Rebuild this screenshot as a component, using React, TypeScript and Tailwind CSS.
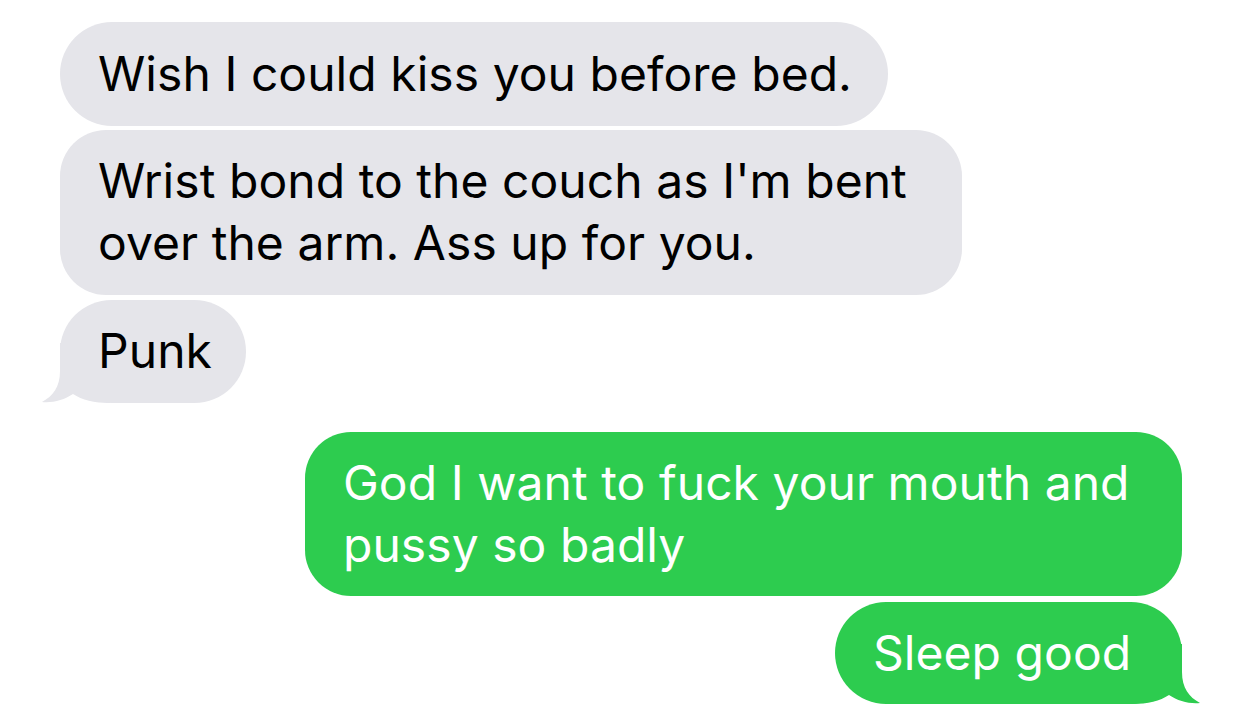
const gray = "#e5e5ea";
const green = "#2dcc4f";

const TailLeft = () => (
  <svg
    className="absolute left-[-20px] bottom-0"
    width="70"
    height="60"
    viewBox="0 0 70 60"
  >
    <path
      d="M20 0 L20 28 C20 44 13 53 2 59 C13 60 24 57 33 51 C42 57 54 60 70 60 L70 0 Z"
      fill={gray}
    />
  </svg>
);

const TailRight = () => (
  <svg
    className="absolute right-[-20px] bottom-0"
    width="70"
    height="60"
    viewBox="0 0 70 60"
  >
    <path
      d="M50 0 L50 28 C50 44 57 53 68 59 C57 60 46 57 37 51 C28 57 16 60 0 60 L0 0 Z"
      fill={green}
    />
  </svg>
);

const App = () => {
  return (
    <div
      className="w-[1242px] h-[723px] bg-white overflow-hidden px-[60px] pt-[22px] flex flex-col text-[48px] leading-[62px] tracking-[0.05px]"
      style={{ fontFamily: "Inter, 'Noto Sans', sans-serif" }}
    >
      <div className="flex flex-col gap-[4px] items-start">
        <div className="w-[828px] h-[104px] rounded-[52px] bg-[#e5e5ea] text-black pl-[38px] py-[21px] whitespace-nowrap">
          Wish I could kiss you before bed.
        </div>
        <div className="w-[902px] h-[165px] rounded-[46px] bg-[#e5e5ea] text-black pl-[38px] py-[20px] whitespace-nowrap">
          Wrist bond to the couch as I'm bent
          <br />
          over the arm. Ass up for you.
        </div>
        <div className="relative mt-[1px] w-[186px] h-[103px] rounded-[52px] bg-[#e5e5ea] text-black pl-[38px] py-[20px]">
          <TailLeft />
          <span className="relative">Punk</span>
        </div>
      </div>
      <div className="flex flex-col gap-[6px] items-end mt-[29px]">
        <div className="w-[877px] h-[164px] rounded-[46px] bg-[#2dcc4f] text-white pl-[38px] py-[20px] whitespace-nowrap">
          God I want to fuck your mouth and
          <br />
          pussy so badly
        </div>
        <div className="relative w-[347px] h-[102px] rounded-[51px] bg-[#2dcc4f] text-white pl-[38px] py-[20px] whitespace-nowrap">
          <TailRight />
          <span className="relative">Sleep good</span>
        </div>
      </div>
    </div>
  );
};

export default App;
